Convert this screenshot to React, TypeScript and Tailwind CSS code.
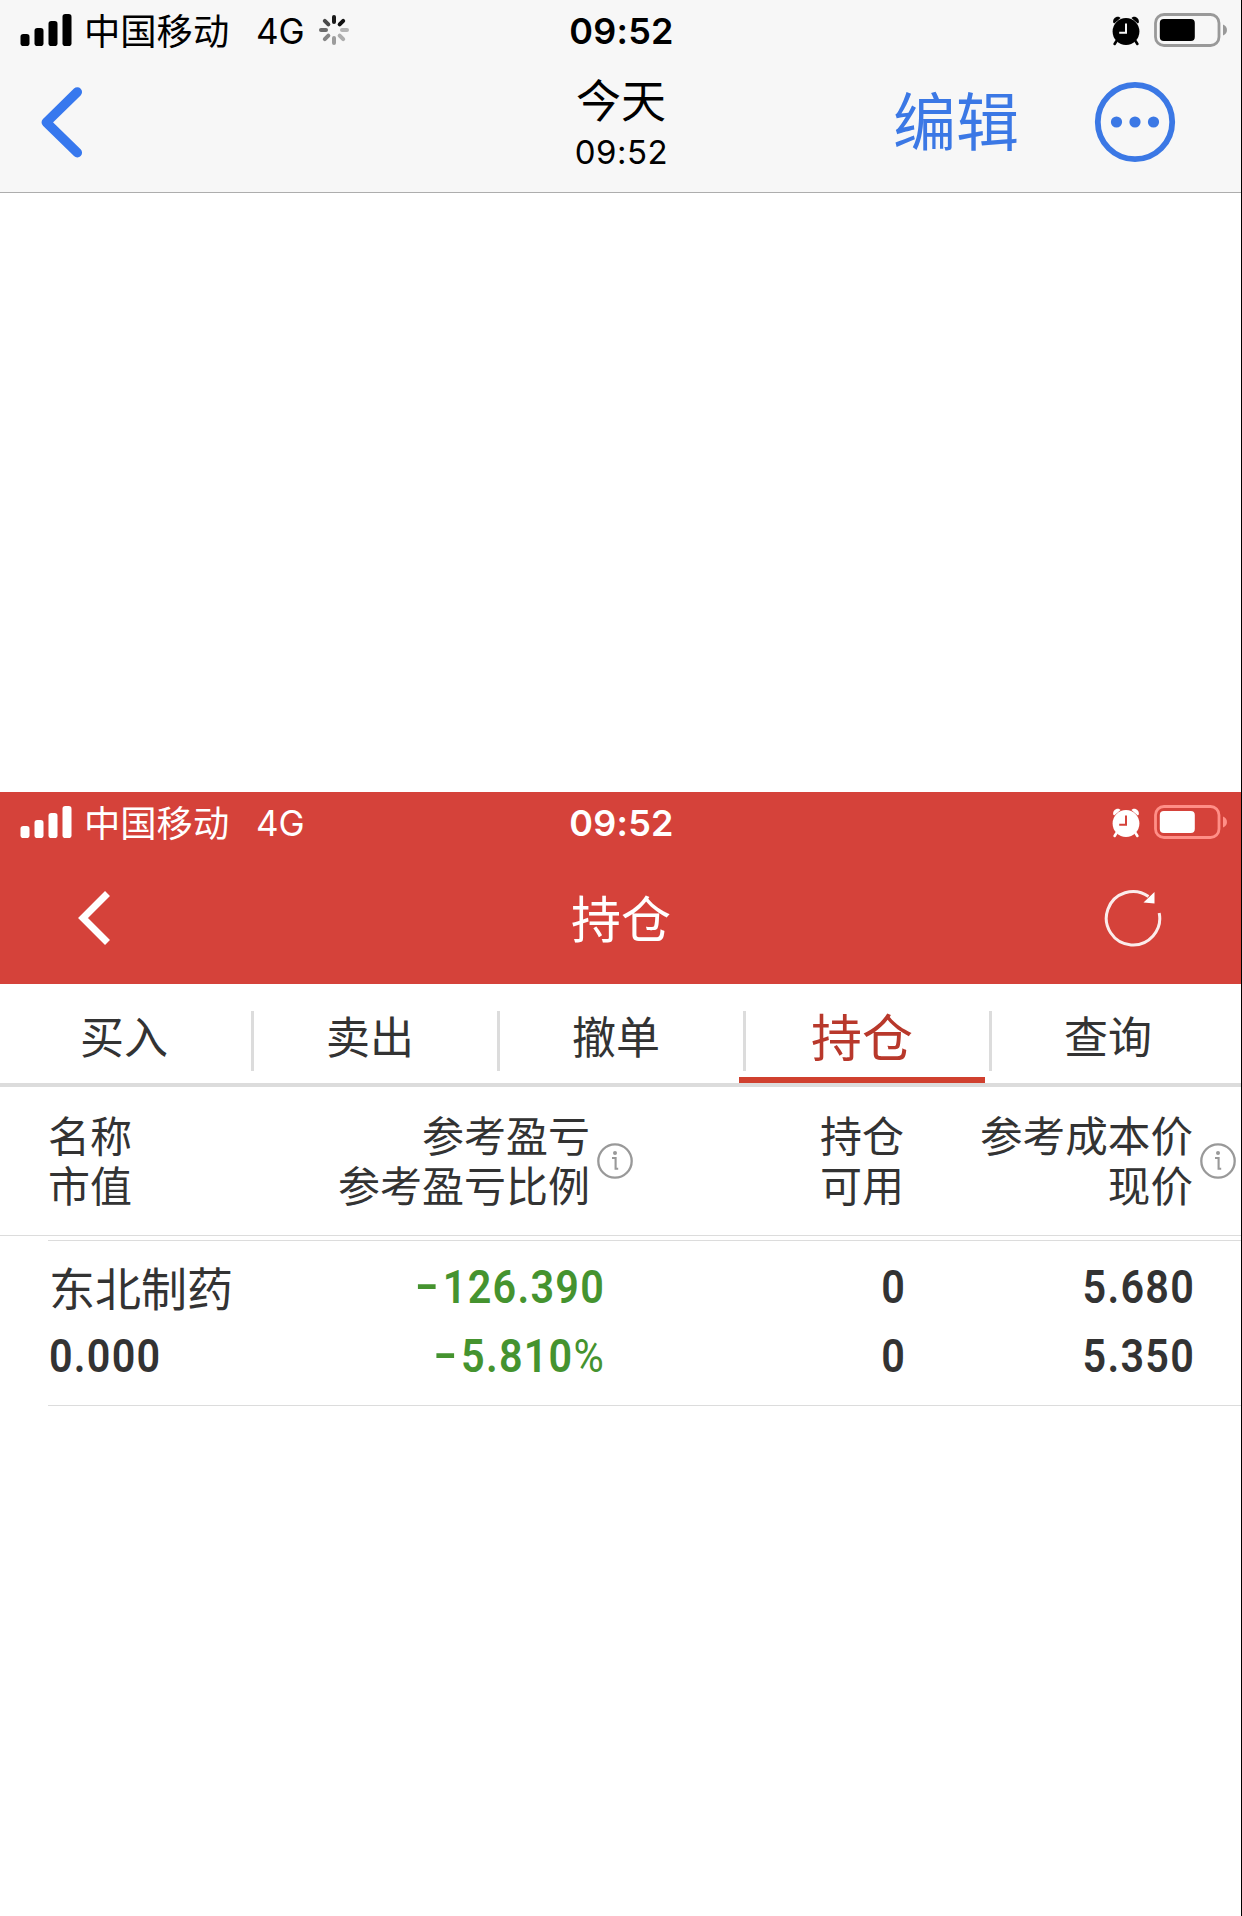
import React from "react";

const SPOKES = [
  { angle: 0, shade: "#1a1a1a" },
  { angle: 45, shade: "#111111" },
  { angle: 90, shade: "#b4b4b4" },
  { angle: 135, shade: "#adadad" },
  { angle: 180, shade: "#9c9c9c" },
  { angle: 225, shade: "#858585" },
  { angle: 270, shade: "#6b6b6b" },
  { angle: 315, shade: "#4a4a4a" },
];

function SignalBars() {
  return (
    <svg className="mb-0.5 h-8 w-[52px]" viewBox="0 0 52 32" fill="currentColor">
      <rect x="0.5" y="20" width="9" height="12" rx="2.8" />
      <rect x="14.5" y="14" width="9" height="18" rx="2.8" />
      <rect x="28.5" y="7" width="9" height="25" rx="2.8" />
      <rect x="42.5" y="0" width="9" height="32" rx="2.8" />
    </svg>
  );
}

function Spinner() {
  return (
    <svg className="mb-0.5 ml-[13px] h-8 w-8" viewBox="-16 -16 32 32">
      {SPOKES.map((s) => (
        <line
          key={s.angle}
          x1="0"
          y1="-8"
          x2="0"
          y2="-13"
          stroke={s.shade}
          strokeWidth="4"
          strokeLinecap="round"
          transform={`rotate(${s.angle})`}
        />
      ))}
    </svg>
  );
}

function AlarmIcon({ hands }: { hands: string }) {
  return (
    <svg className="mt-px h-[30px] w-7" viewBox="0 0 28 30">
      <g fill="currentColor">
        <path d="M1.2 6.6C.6 3 3.4.2 7.2.9L8.6 2 2.2 7.4z" />
        <path d="M26.8 6.6C27.4 3 24.6.2 20.8.9L19.4 2l6.4 5.4z" />
        <circle cx="14" cy="15.5" r="13.4" />
      </g>
      <path d="M4.5 25 2.6 28M23.5 25l1.9 3" stroke="currentColor" strokeWidth="2.6" strokeLinecap="round" />
      <path d="M14 7.5v9.2H7.2" fill="none" stroke={hands} strokeWidth="2" />
    </svg>
  );
}

function Battery({ outline }: { outline: string }) {
  return (
    <svg className="h-[34px] w-[75px]" viewBox="0 0 75 34">
      <rect x="1.5" y="1.5" width="63.5" height="31" rx="8.5" fill="none" stroke={outline} strokeWidth="2.8" />
      <rect x="5.8" y="6" width="35" height="22" rx="4" fill="currentColor" />
      <path d="M69 11.5c5.3 1.8 5.3 9.2 0 11z" fill={outline} />
    </svg>
  );
}

function StatusBar({ loading, tone, outline }: { loading?: boolean; tone: string; outline: string }) {
  return (
    <div className="grid h-[62px] grid-cols-[1fr_auto_1fr] items-center">
      <div className="flex items-center pl-5">
        <SignalBars />
        <span className="mb-[3px] ml-3 w-[172px] text-[36.3px] leading-[59px] whitespace-nowrap">中国移动</span>
        <span className="w-[49px] font-[Inter] text-[35px] leading-[62px] tracking-[-0.2px]">4G</span>
        {loading && <Spinner />}
      </div>
      <span className="pl-px font-[Inter] text-[36px] leading-[62px] font-semibold tracking-[0.2px]">09:52</span>
      <div className="flex items-center justify-end pr-[13px] pb-0.5">
        <AlarmIcon hands={tone} />
        <div className="w-3.5" />
        <Battery outline={outline} />
      </div>
    </div>
  );
}

function InfoIcon() {
  return (
    <svg className="h-9 w-9 shrink-0" viewBox="0 0 36 36" fill="none" stroke="#999">
      <circle cx="18" cy="18" r="16.7" strokeWidth="2.3" />
      <circle cx="18" cy="10" r="2" fill="#999" stroke="none" />
      <path d="M15 15H18.6V25.8H21.2" strokeWidth="2.1" />
    </svg>
  );
}

const TABS = ["买入", "卖出", "撤单", "持仓", "查询"];

function Tabs() {
  return (
    <nav className="flex h-[103px] border-b-4 border-[#dcdcdc] pl-px">
      {TABS.map((t, i) => (
        <div key={t} className="relative w-[246px] shrink-0">
          {t === "持仓" ? (
            <div className="flex h-full items-center justify-center border-b-6 border-[#d0402f] pt-2.5 text-[51px] leading-none text-[#b8382b]">
              {t}
            </div>
          ) : (
            <div className="flex h-full items-center justify-center pt-[3px] text-[44px] leading-none">{t}</div>
          )}
          {i < 4 && <div className="absolute top-[27px] -right-[7px] h-[60px] w-[3px] bg-[#dcdcdc]" />}
        </div>
      ))}
    </nav>
  );
}

function Figure({ children, left }: { children: React.ReactNode; left?: boolean }) {
  return (
    <span
      className={
        (left ? "ml-px origin-left" : "-mr-[3px] origin-right") +
        " block h-[69px] scale-x-[0.88] font-[Roboto] text-[47px] leading-[67px] font-semibold tracking-[1.4px] whitespace-nowrap"
      }
    >
      {children}
    </span>
  );
}

function Minus() {
  return <span className="mr-0.5 inline-block origin-right -translate-y-0.5 scale-x-[1.6]">-</span>;
}

export default function App() {
  return (
    <div className="h-[1916px] w-[1242px] overflow-hidden border-r border-black bg-white font-['Noto_Sans_CJK_SC',sans-serif] text-[#333]">
      <header className="h-[193px] w-[1242px] border-b border-[#adadad] bg-[#f7f7f7] text-black">
        <StatusBar loading tone="#f7f7f7" outline="#999999" />
        <div className="grid h-[130px] grid-cols-[1fr_auto_1fr]">
          <svg className="mt-6 ml-10 h-[74px] w-12" viewBox="0 0 48 74" fill="none" stroke="#3778ee" strokeWidth="9.5" strokeLinecap="round" strokeLinejoin="round">
            <path d="M37.3 6 6.3 36.3 37.3 66.7" />
          </svg>
          <div className="flex flex-col items-center">
            <span className="mt-[13px] h-12 text-[45px] leading-[48px]">今天</span>
            <span className="mt-[5px] h-12 pl-px font-[Inter] text-[33px] leading-[48px] tracking-[0.5px]">09:52</span>
          </div>
          <div className="flex items-start justify-end pr-[66px] text-[#3b78e5]">
            <span className="mr-[75px] h-20 pt-4 text-[63px] leading-[80px]">编辑</span>
            <svg className="mt-[19px] h-[82px] w-[82px]" viewBox="-41 -41 82 82" fill="currentColor">
              <circle r="37.2" fill="none" stroke="currentColor" strokeWidth="5.8" />
              <circle cx="-18.5" r="5.6" />
              <circle r="5.6" />
              <circle cx="18.5" r="5.6" />
            </svg>
          </div>
        </div>
      </header>

      <div className="h-[599px]" />

      <section className="h-48 bg-[#d5423a] text-white">
        <div className="w-[1242px]">
          <StatusBar tone="#d5423a" outline="#ff8f87" />
          <div className="grid h-[130px] grid-cols-[1fr_auto_1fr] items-center">
            <svg className="mb-0.5 ml-[74px] h-[60px] w-10" viewBox="0 0 40 60" fill="none" stroke="#fff" strokeWidth="7">
              <path d="M33.5 5.5 9 30 33.5 54.5" />
            </svg>
            <span className="mb-1.5 text-[50px] leading-none">持仓</span>
            <svg className="mr-[78px] mb-0.5 h-[62px] w-[62px] justify-self-end" viewBox="-31 -31 62 62">
              <path d="M26.2 -5A26.7 26.7 0 1 1 15.5 -21.5" fill="none" stroke="#fff" strokeOpacity="0.9" strokeWidth="3" />
              <path d="M21.5 -26V-14.5L10.5 -15.5z" fill="#fff" />
            </svg>
          </div>
        </div>
      </section>

      <Tabs />

      <div className="flex h-[149px] border-b border-[#dcdcdc] pt-[22px] text-[42px] leading-[50px]">
        <div className="ml-12 w-[200px]">
          名称
          <br />
          市值
        </div>
        <div className="w-[342px] text-right">
          参考盈亏
          <br />
          参考盈亏比例
        </div>
        <div className="flex w-[54px] items-center pb-[22px] pl-[7px]">
          <InfoIcon />
        </div>
        <div className="w-[260px] text-right">
          持仓
          <br />
          可用
        </div>
        <div className="w-[289px] text-right text-[42.6px]">
          参考成本价
          <br />
          现价
        </div>
        <div className="flex items-center pb-[22px] pl-[7px]">
          <InfoIcon />
        </div>
      </div>

      <div className="mt-1 ml-12 flex h-[166px] border-y border-[#dcdcdc] pt-3">
        <div className="w-[254px]">
          <span className="block h-[69px] pl-px text-[46px] leading-[66px]">东北制药</span>
          <Figure left>0.000</Figure>
        </div>
        <div className="w-[300px] text-right text-[#45932f]">
          <Figure>
            <Minus />
            126.390
          </Figure>
          <Figure>
            <Minus />
            5.810<span className="font-normal">%</span>
          </Figure>
        </div>
        <div className="w-[301px] text-right">
          <Figure>0</Figure>
          <Figure>0</Figure>
        </div>
        <div className="w-[289px] text-right">
          <Figure>5.680</Figure>
          <Figure>5.350</Figure>
        </div>
      </div>
    </div>
  );
}
